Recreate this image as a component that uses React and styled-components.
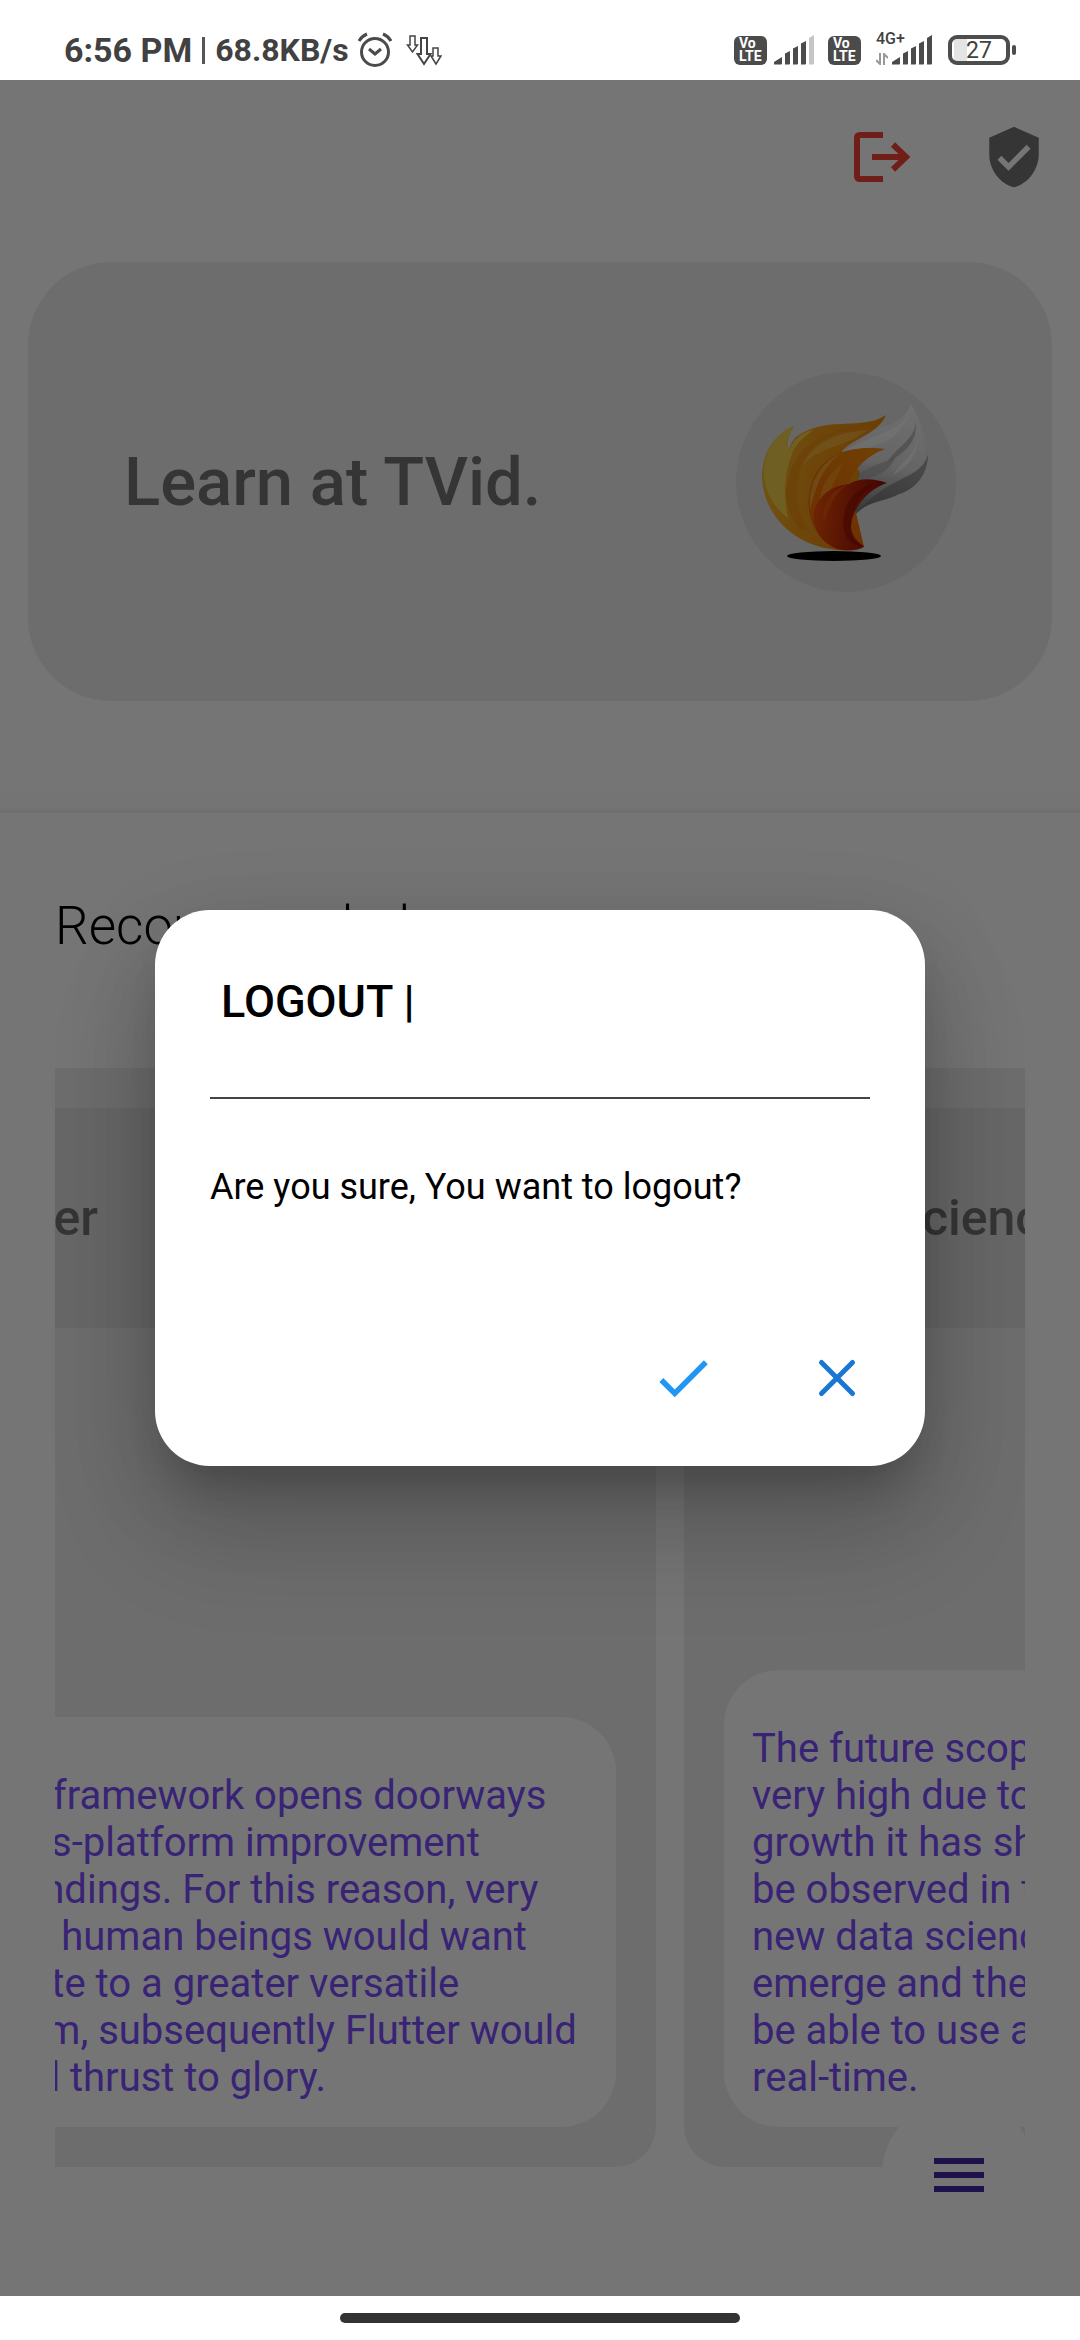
import React from "react";
import styled, { createGlobalStyle } from "styled-components";

const Global = createGlobalStyle`
  *, *::before, *::after { box-sizing: border-box; }
  body { margin: 0; background: #fff; font-family: Roboto, "Noto Sans", sans-serif; }
  h1, h2, h3, p { margin: 0; }
  button { border: 0; padding: 0; background: none; font: inherit; cursor: pointer; }
  svg { display: block; }
`;

const Screen = styled.div`
  min-height: 100vh;
  display: flex;
  flex-direction: column;
`;

const StatusBar = styled.div`
  height: 80px;
  padding: 20px 64px 0;
  display: flex;
  align-items: center;
  justify-content: space-between;
  color: #414141;
`;

const StatusGroup = styled.div`
  display: flex;
  align-items: center;
  gap: ${(p) => p.$gap}px;
`;

const Clock = styled.span`
  font-size: 34px;
  line-height: 40px;
  font-weight: 700;
`;

const Speed = styled.span`
  font-size: 32px;
  line-height: 40px;
  font-weight: 700;
`;

const Separator = styled.span`
  width: 3px;
  height: 27px;
  background: #555;
`;

const AppArea = styled.div`
  flex: 1;
  position: relative;
  display: flex;
  flex-direction: column;
`;

const Toolbar = styled.header`
  height: 154px;
  padding: 0 33px;
  display: flex;
  align-items: center;
  justify-content: flex-end;
  gap: 66px;
`;

const IconButton = styled.button`
  width: 66px;
  height: 66px;
  color: ${(p) => p.$color};
`;

const Hero = styled.section`
  height: 439px;
  margin: 28px 28px 0;
  padding: 0 96px;
  border-radius: 83px;
  background: #eee;
  display: flex;
  align-items: center;
  justify-content: space-between;
`;

const HeroTitle = styled.h1`
  font-size: 67px;
  line-height: 78px;
  font-weight: 500;
  color: #757575;
`;

const Avatar = styled.div`
  width: 220px;
  height: 220px;
  border-radius: 50%;
  background: #e0e0e0;
`;

const Divider = styled.div`
  height: 34px;
  margin-top: 78px;
  border-bottom: 3px solid #f1f1f5;
  background: linear-gradient(#fff, #fbfbfd);
`;

const Section = styled.section`
  padding: 80px 55px 0;
`;

const SectionTitle = styled.h2`
  font-size: 53px;
  line-height: 66px;
  font-weight: 300;
  color: #000;
`;

const Carousel = styled.div`
  margin-top: 109px;
  overflow: hidden;
`;

const Track = styled.div`
  display: flex;
  gap: 28px;
  margin-left: -195px;
`;

const Card = styled.article`
  flex: 0 0 796px;
  height: 1099px;
  padding: 40px 0;
  border-radius: 41px;
  background: #eee;
  display: flex;
  flex-direction: column;
  justify-content: space-between;
`;

const CardHeading = styled.h3`
  height: 220px;
  padding: 0 92px;
  display: flex;
  align-items: center;
  background: #e0e0e0;
  font-size: 50px;
  line-height: 58px;
  font-weight: 500;
  color: #757575;
`;

const CardText = styled.p`
  margin: 0 40px;
  padding: 55px 28px 26px;
  border-radius: 55px;
  background: #fff;
  color: #7c4dff;
  font-size: 40px;
  line-height: 47px;
  white-space: pre;
  overflow: hidden;
`;

const Fab = styled.button`
  position: absolute;
  right: 44px;
  bottom: 44px;
  width: 154px;
  height: 154px;
  border-radius: 50%;
  background: #fff;
  color: #4527a0;
  display: grid;
  place-items: center;
`;

const Scrim = styled.div`
  position: absolute;
  inset: 0;
  display: grid;
  place-items: center;
  background: rgba(0, 0, 0, 0.54);
`;

const Dialog = styled.div`
  width: calc(100% - 310px);
  padding: 55px;
  border-radius: 55px;
  background: #fff;
  box-shadow: 0 30px 42px -18px rgba(0, 0, 0, 0.2), 0 66px 104px 8px rgba(0, 0, 0, 0.14),
    0 24px 90px 4px rgba(0, 0, 0, 0.12);
`;

const DialogTitle = styled.h2`
  padding: 10px 11px 68px;
  border-bottom: 2px solid #444;
  font-size: 45px;
  line-height: 54px;
  font-weight: 500;
  color: #000;
`;

const DialogText = styled.p`
  margin-top: 66px;
  font-size: 36px;
  line-height: 44px;
  color: #000;
`;

const DialogActions = styled.div`
  margin-top: 136px;
  display: flex;
  justify-content: flex-end;
  gap: 88px;
`;

const NavBar = styled.div`
  height: 44px;
  display: grid;
  place-items: center;
`;

const Handle = styled.div`
  width: 37%;
  height: 10px;
  border-radius: 5px;
  background: #333;
`;

const VolteBadge = styled.span`
  width: 33px;
  height: 29px;
  border-radius: 6px;
  background: #4b4b4b;
  color: #fff;
  display: flex;
  flex-direction: column;
  justify-content: center;
  padding-left: 5px;
  font-size: 14px;
  line-height: 13px;
  font-weight: 700;
`;

const Network = styled.span`
  position: relative;
  display: flex;
  margin-left: 17px;
`;

const NetworkLabel = styled.span`
  position: absolute;
  left: -16px;
  top: -4px;
  font-size: 16px;
  line-height: 16px;
  font-weight: 500;
`;

const NetworkArrows = styled.span`
  position: absolute;
  left: -16px;
  bottom: 0;
`;

const Battery = styled.span`
  display: flex;
  align-items: center;
  gap: 2px;
  margin-left: 2px;
`;

const BatteryCell = styled.span`
  width: 62px;
  height: 30px;
  border: 4px solid #4d4d4d;
  border-radius: 9px;
  background: linear-gradient(90deg, #fff 2px, #e4e4e4 2px, #e4e4e4 15px, #fff 15px);
  font-size: 23px;
  line-height: 23px;
  text-align: center;
`;

const BatteryTip = styled.span`
  width: 4px;
  height: 10px;
  border-radius: 2px;
  background: #4d4d4d;
`;

function Signal({ last = "#4b4b4b" }) {
  return (
    <svg width="40" height="30" viewBox="0 0 40 30" fill="#4b4b4b" aria-hidden="true">
      <path d="M0 29.500V27L8 22v6.500a1 1 0 0 1-1 1z" />
      <path d="M11 18.500l5-2.500v12.500a1 1 0 0 1-1 1h-4z" />
      <path d="M19 13.500l5-2.500v17.500a1 1 0 0 1-1 1h-4z" />
      <path d="M27 8.500l5-2.500v22.500a1 1 0 0 1-1 1h-4z" />
      <path d="M35 3l5-3v28.500a1 1 0 0 1-1 1h-4z" fill={last} />
    </svg>
  );
}

function Volte() {
  return (
    <VolteBadge>
      <span>Vo</span>
      <span>LTE</span>
    </VolteBadge>
  );
}

function AlarmIcon() {
  return (
    <svg width="34" height="36" viewBox="0 0 34 36" fill="none" stroke="#4b4b4b" strokeWidth="3" aria-hidden="true">
      <circle cx="17" cy="20" r="13.500" />
      <path d="M11 17l6 5 6-5" />
      <path d="M1 9q3-5 8-7M33 9q-3-5-8-7" />
    </svg>
  );
}

function DownloadsIcon() {
  return (
    <svg width="36" height="32" viewBox="0 0 36 32" fill="none" stroke="#444" strokeWidth="1.500" aria-hidden="true">
      <path d="M4 2h5v9h2.500L6.500 18 1.500 11H4z" />
      <path d="M15 4h6v16h3.500L18 30l-6.500-10H15z" strokeWidth="2" />
      <path d="M27 14h5v8h3l-5 8-5-8h2z" />
    </svg>
  );
}

function LogoutIcon() {
  return (
    <svg width="66" height="66" viewBox="0 0 66 66" fill="none" stroke="currentColor" strokeWidth="6" aria-hidden="true">
      <path d="M34 11H11q-3 0-3 3v38q0 3 3 3h23" />
      <path d="M23 33h34" />
      <path d="M44 20.500l13 12.500-13 12.500" />
    </svg>
  );
}

function ShieldIcon() {
  return (
    <svg width="66" height="66" viewBox="0 0 24 24" fill="currentColor" aria-hidden="true">
      <path d="M12 1L3 5v6c0 5.550 3.840 10.740 9 12 5.160-1.260 9-6.450 9-12V5l-9-4zm-2 16l-4-4 1.410-1.410L10 14.170l6.590-6.590L18 9l-8 8z" />
    </svg>
  );
}

function FlameLogo() {
  return (
    <svg width="220" height="220" viewBox="0 0 220 220" aria-hidden="true">
      <defs>
        <linearGradient id="gold" x1="0" y1="0.3" x2="1" y2="0.5">
          <stop offset="0" stopColor="#f5b52c" />
          <stop offset="0.4" stopColor="#f09a18" />
          <stop offset="1" stopColor="#ea8208" />
        </linearGradient>
        <linearGradient id="orange" x1="0.8" y1="0" x2="0.2" y2="1">
          <stop offset="0" stopColor="#f28a08" />
          <stop offset="1" stopColor="#ec6404" />
        </linearGradient>
        <linearGradient id="red" x1="0.05" y1="0.5" x2="0.9" y2="0.6">
          <stop offset="0" stopColor="#e84c0a" />
          <stop offset="0.5" stopColor="#bc2806" />
          <stop offset="1" stopColor="#980c04" />
        </linearGradient>
        <linearGradient id="silver" x1="0.6" y1="0" x2="0.4" y2="1">
          <stop offset="0" stopColor="#f2f2f2" />
          <stop offset="0.5" stopColor="#dcdcdc" />
          <stop offset="0.75" stopColor="#a8a8a8" />
          <stop offset="1" stopColor="#6c6c6c" />
        </linearGradient>
      </defs>
      <ellipse cx="98" cy="184" rx="47" ry="5" fill="#000" />
      <path d="M175 32C171 42 165 48 156 52 140 57 124 60 106 76L108 150 121 141C132 129 148 130 163 122 180 117 192 102 192 82 190 88 188 91 184 94 194 72 186 50 175 32z" fill="url(#silver)" />
      <path d="M175 32C174 58 140 60 106 80 142 76 170 68 175 32z" fill="#fff" opacity="0.5" />
      <path d="M179 44C184 66 160 74 150 92 168 80 184 72 179 44z" fill="#9a9a9a" opacity="0.6" />
      <path d="M182 66C178 84 166 90 156 104 172 94 182 84 182 66z" fill="#fff" opacity="0.5" />
      <path d="M160 84C150 92 128 92 114 112 134 106 154 102 160 84z" fill="#a4a4a4" opacity="0.6" />
      <path d="M192 82C186 108 150 104 121 141 134 128 148 130 163 122 180 117 192 102 192 82z" fill="#6a6a6a" opacity="0.55" />
      <path d="M150 43C140 50 128 51 106 52 88 52 72 56 60 65 55 70 53 76 53 80 50 70 53 62 58 54 38 62 26 82 26 106 28 146 62 176 104 178L124 100 106 79C118 66 142 62 150 43z" fill="url(#gold)" />
      <path d="M58 54C36 64 28 82 28 104 29 120 38 136 52 146 46 118 50 98 56 82 60 72 68 64 78 58 66 60 56 68 53 80 50 70 53 62 58 54z" fill="#f2d04a" />
      <path d="M138 53C112 56 76 62 64 98 60 120 60 140 72 158 62 160 52 146 50 122 52 82 78 56 138 53z" fill="#e88a10" opacity="0.6" />
      <path d="M132 58C106 60 80 66 66 94 84 74 108 76 132 58z" fill="#f8c65a" opacity="0.5" />
      <path d="M149 77C126 74 94 76 79 102 64 134 76 166 102 178 122 180 128 175 128 175L113 111C119 96 130 84 149 77z" fill="url(#orange)" />
      <path d="M104 82C82 92 72 114 74 138 80 116 84 98 104 82z" fill="#f8b040" opacity="0.7" />
      <path d="M106 92C88 104 80 124 85 146 86 126 98 116 106 92z" fill="#fba028" opacity="0.6" />
      <path d="M151 111C136 106 124 106 113 112 94 114 82 124 78 140 76 160 88 174 106 178 116 179 124 178 128 174 118 170 114 162 115 154 117 134 134 116 151 111z" fill="url(#red)" />
      <path d="M112 112C96 118 84 132 88 152 92 136 98 122 112 112z" fill="#f0600c" opacity="0.6" />
      <path d="M140 111C118 116 104 134 108 158 110 168 116 174 128 174 114 166 112 150 118 138 122 126 130 116 140 111z" fill="#8c0a04" opacity="0.5" />
    </svg>
  );
}

const flutterText = [
  "Flutter framework opens doorways",
  "to cross-platform improvement",
  "surroundings. For this reason, very",
  "certain human beings would want",
  "graduate to a greater versatile",
  "platform, subsequently Flutter would",
  "upward thrust to glory.",
].join("\n");

const dataText = [
  "The future scope of data science is",
  "very high due to the massive",
  "growth it has shown and it can",
  "be observed in the market that",
  "new data science roles will",
  "emerge and the companies will",
  "be able to use analytics in",
  "real-time.",
].join("\n");

export default function App() {
  return (
    <Screen>
      <Global />
      <StatusBar>
        <StatusGroup $gap={10}>
          <Clock>6:56 PM</Clock>
          <Separator />
          <StatusGroup $gap={9}>
            <Speed>68.8KB/s</Speed>
            <StatusGroup $gap={14}>
              <AlarmIcon />
              <DownloadsIcon />
            </StatusGroup>
          </StatusGroup>
        </StatusGroup>
        <StatusGroup $gap={14}>
          <StatusGroup $gap={7}>
            <Volte />
            <Signal last="#c6c6c6" />
          </StatusGroup>
          <Volte />
          <Network>
            <NetworkLabel>4G+</NetworkLabel>
            <NetworkArrows>
              <svg width="12" height="12" viewBox="0 0 12 12" fill="none" stroke="#999" strokeWidth="2" aria-hidden="true">
                <path d="M4 0v11L0 7M8 12V1l4 4" />
              </svg>
            </NetworkArrows>
            <Signal />
          </Network>
          <Battery>
            <BatteryCell>27</BatteryCell>
            <BatteryTip />
          </Battery>
        </StatusGroup>
      </StatusBar>

      <AppArea>
        <Toolbar>
          <IconButton $color="#f44336" aria-label="Log out">
            <LogoutIcon />
          </IconButton>
          <IconButton $color="#757575" aria-label="Privacy">
            <ShieldIcon />
          </IconButton>
        </Toolbar>
        <Hero>
          <HeroTitle>Learn at TVid.</HeroTitle>
          <Avatar>
            <FlameLogo />
          </Avatar>
        </Hero>
        <Divider />
        <Section>
          <SectionTitle>Recommended</SectionTitle>
          <Carousel>
            <Track>
              <Card>
                <CardHeading>Flutter</CardHeading>
                <CardText>{flutterText}</CardText>
              </Card>
              <Card>
                <CardHeading>Data Science</CardHeading>
                <CardText>{dataText}</CardText>
              </Card>
            </Track>
          </Carousel>
        </Section>
        <Fab aria-label="Menu">
          <svg width="50" height="34" viewBox="0 0 50 34" fill="currentColor" aria-hidden="true">
            <path d="M0 0h50v6H0zM0 14h50v6H0zM0 28h50v6H0z" />
          </svg>
        </Fab>
        <Scrim>
          <Dialog role="dialog" aria-modal="true" aria-labelledby="logout-title">
            <DialogTitle id="logout-title">LOGOUT |</DialogTitle>
            <DialogText>Are you sure, You want to logout?</DialogText>
            <DialogActions>
              <IconButton $color="#2196f3" aria-label="Confirm">
                <svg width="66" height="66" viewBox="0 0 24 24" fill="currentColor" aria-hidden="true">
                  <path d="M9 16.170L4.830 12l-1.420 1.410L9 19 21 7l-1.410-1.410z" />
                </svg>
              </IconButton>
              <IconButton $color="#1976d2" aria-label="Cancel">
                <svg width="66" height="66" viewBox="0 0 66 66" stroke="currentColor" strokeWidth="5" strokeLinecap="round" aria-hidden="true">
                  <path d="M17.500 17.500l31 31M48.500 17.500l-31 31" />
                </svg>
              </IconButton>
            </DialogActions>
          </Dialog>
        </Scrim>
      </AppArea>

      <NavBar>
        <Handle />
      </NavBar>
    </Screen>
  );
}
